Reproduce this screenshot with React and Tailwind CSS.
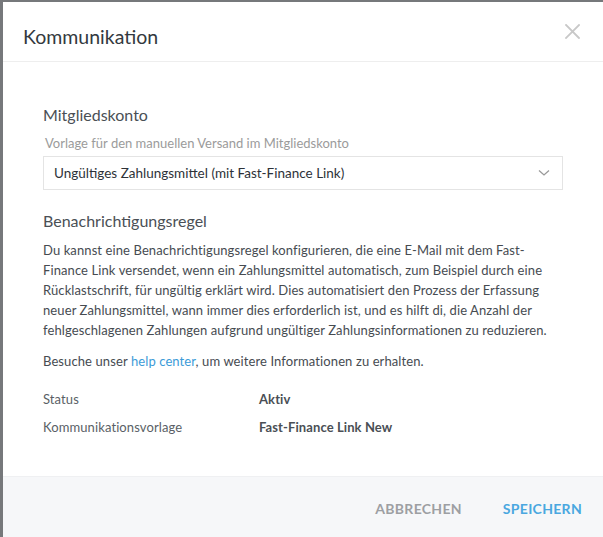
import React from "react";

export default function App() {
  return (
    <div className="w-[603px] h-[537px] overflow-hidden bg-[#76787b] pl-[3px] pt-[2px]" style={{ fontFamily: "Lato, 'Open Sans', sans-serif" }}>
      <div className="w-[600px] h-[540px] bg-white flex flex-col">
        <div className="h-[60px] shrink-0 flex items-start justify-between pl-[20px] pr-[23px] border-b border-[#eeeeee]">
          <h1 className="mt-[23px] text-[19.5px] leading-[24px] text-[#333940]">Kommunikation</h1>
          <svg width="15" height="15" viewBox="0 0 15 15" className="mt-[22px]">
            <path d="M1 1 L14 14 M14 1 L1 14" stroke="#c8c8c8" strokeWidth="1.8" strokeLinecap="square" />
          </svg>
        </div>
        <div className="flex-1 px-[40px] pt-[43px]">
          <h2 className="text-[16px] leading-[20px] text-[#4a4f55]">Mitgliedskonto</h2>
          <div className="mt-[10px] pl-[2px] text-[13px] leading-[16px] text-[#9b9b9b]">Vorlage für den manuellen Versand im Mitgliedskonto</div>
          <div className="mt-[5px] w-[520px] h-[34px] border border-[#e4e4e4] flex items-center justify-between pl-[10px] pr-[12px]">
            <span className="text-[13.5px] text-[#2d3238]">Ungültiges Zahlungsmittel (mit Fast-Finance Link)</span>
            <svg width="12" height="8" viewBox="0 0 12 8">
              <path d="M1 1.5 L6 6 L11 1.5" stroke="#9a9a9a" strokeWidth="1.3" fill="none" />
            </svg>
          </div>
          <h2 className="mt-[21px] text-[16px] leading-[20px] text-[#4a4f55]">Benachrichtigungsregel</h2>
          <p className="mt-[9px] w-[516px] text-[13px] leading-[20px] tracking-[0.1px] text-[#464b51]">
            Du kannst eine Benachrichtigungsregel konfigurieren, die eine E-Mail mit dem Fast-Finance Link versendet, wenn ein Zahlungsmittel automatisch, zum Beispiel durch eine Rücklastschrift, für ungültig erklärt wird. Dies automatisiert den Prozess der Erfassung neuer Zahlungsmittel, wann immer dies erforderlich ist, und es hilft di, die Anzahl der fehlgeschlagenen Zahlungen aufgrund ungültiger Zahlungsinformationen zu reduzieren.
          </p>
          <p className="mt-[11px] text-[13px] leading-[20px] tracking-[0.1px] text-[#464b51]">
            Besuche unser <span className="text-[#3b9bd8]">help center</span>, um weitere Informationen zu erhalten.
          </p>
          <div className="mt-[18px] grid grid-cols-[216px_1fr] gap-y-[8px] text-[13px] leading-[20px] tracking-[0.1px]">
            <span className="text-[#5a5f66]">Status</span>
            <span className="font-bold text-[#4a4f55]">Aktiv</span>
            <span className="text-[#5a5f66]">Kommunikationsvorlage</span>
            <span className="font-bold text-[#4a4f55]">Fast-Finance Link New</span>
          </div>
        </div>
        <div className="h-[66px] shrink-0 bg-[#f6f7f9] border-t border-[#eff0f2] flex items-start justify-end pt-[21px] pr-[21px] gap-[41px]">
          <span className="text-[14px] font-bold tracking-[0.3px] text-[#9d9fa3]">ABBRECHEN</span>
          <span className="text-[14px] font-bold tracking-[0.3px] text-[#4aa7e0]">SPEICHERN</span>
        </div>
      </div>
    </div>
  );
}
